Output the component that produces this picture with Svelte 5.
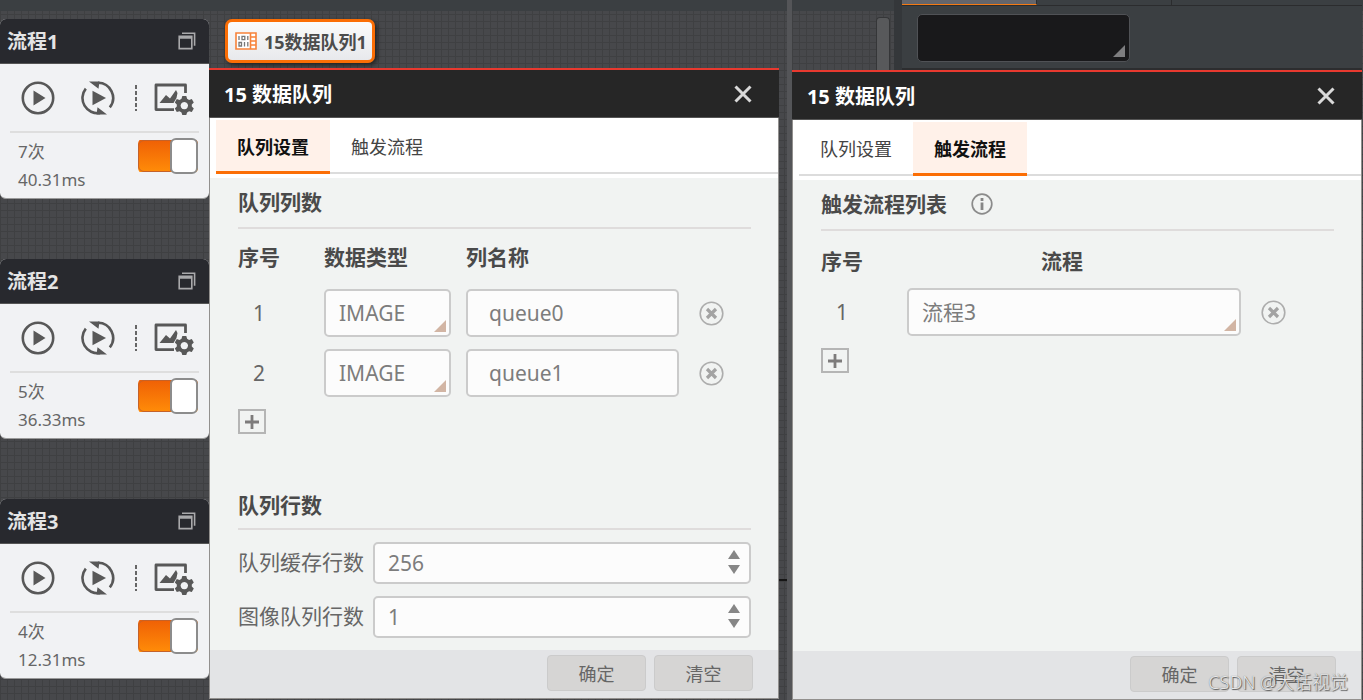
<script lang="ts">
	type Tab = 'settings' | 'trigger';

	let flows = $state([
		{ name: '流程1', count: 7, time: '40.31ms', enabled: true },
		{ name: '流程2', count: 5, time: '36.33ms', enabled: true },
		{ name: '流程3', count: 4, time: '12.31ms', enabled: true }
	]);

	let leftTab: Tab = $state('settings');
	let rightTab: Tab = $state('trigger');

	let columns = $state([
		{ type: 'IMAGE', name: 'queue0' },
		{ type: 'IMAGE', name: 'queue1' }
	]);
	let triggers = $state(['流程3']);
	let cacheRows = $state(256);
	let imageRows = $state(1);

	const addColumn = () => {
		columns.push({ type: 'IMAGE', name: `queue${columns.length}` });
	};

	const clear = (tab: Tab) => {
		if (tab === 'settings') {
			columns = [];
		} else {
			triggers = [];
		}
	};
</script>

<svelte:head>
	<title>数据队列</title>
</svelte:head>

{#snippet removeButton(onclick: () => void)}
	<button class="remove" aria-label="删除" {onclick}>
		<svg viewBox="0 0 25 25" width="25" height="25">
			<circle cx="12.5" cy="12.5" r="11.3" fill="none" stroke="#adadad" stroke-width="1.6" />
			<path d="M8 8l9 9M17 8l-9 9" stroke="#a3a3a3" stroke-width="3.2" />
		</svg>
	</button>
{/snippet}

{#snippet addButton(onclick: () => void)}
	<button class="add" aria-label="添加" {onclick}>
		<svg viewBox="0 0 16 16" width="16" height="16">
			<path d="M8 1v14M1 8h14" stroke="#7d7b7b" stroke-width="2.8" />
		</svg>
	</button>
{/snippet}

{#snippet spinner(step: (n: number) => void)}
	<span class="spin">
		<button aria-label="增加" onclick={() => step(1)}>
			<svg viewBox="0 0 12 9" width="12" height="9"><path d="M6 0l6 9H0z" fill="#868686" /></svg>
		</button>
		<button aria-label="减少" onclick={() => step(-1)}>
			<svg viewBox="0 0 12 9" width="12" height="9"><path d="M6 9L0 0h12z" fill="#868686" /></svg>
		</button>
	</span>
{/snippet}

{#snippet settings()}
	<h2>队列列数</h2>
	<table>
		<colgroup><col class="c-index" /><col class="c-type" /><col /><col class="c-remove" /></colgroup>
		<thead>
			<tr><th>序号</th><th>数据类型</th><th>列名称</th><th></th></tr>
		</thead>
		<tbody>
			{#each columns as column, i}
				<tr>
					<td class="index">{i + 1}</td>
					<td class="type">
						<span class="select">
							<select bind:value={column.type} aria-label="数据类型">
								<option>IMAGE</option>
								<option>INT</option>
								<option>FLOAT</option>
							</select>
						</span>
					</td>
					<td><input class="name" bind:value={column.name} aria-label="列名称" /></td>
					<td class="action">{@render removeButton(() => columns.splice(i, 1))}</td>
				</tr>
			{/each}
		</tbody>
	</table>
	{@render addButton(addColumn)}

	<h2 class="second">队列行数</h2>
	<div class="fields">
		<label for="cache">队列缓存行数</label>
		<div class="number">
			<input id="cache" type="number" bind:value={cacheRows} />
			{@render spinner((n) => (cacheRows += n))}
		</div>
		<label for="image">图像队列行数</label>
		<div class="number">
			<input id="image" type="number" bind:value={imageRows} />
			{@render spinner((n) => (imageRows += n))}
		</div>
	</div>
{/snippet}

{#snippet trigger()}
	<h2>
		触发流程列表
		<svg viewBox="0 0 22 22" width="22" height="22">
			<circle cx="11" cy="11" r="9.8" fill="none" stroke="#8b8b8b" stroke-width="1.7" />
			<path d="M11 5v3M11 9.5v7.5" stroke="#858585" stroke-width="2.8" />
		</svg>
	</h2>
	<table class="triggers">
		<colgroup><col class="c-index" /><col /><col class="c-action" /></colgroup>
		<thead>
			<tr><th>序号</th><th class="mid">流程</th><th></th></tr>
		</thead>
		<tbody>
			{#each triggers as _, i}
				<tr>
					<td class="index">{i + 1}</td>
					<td>
						<span class="select">
							<select bind:value={triggers[i]} aria-label="流程">
								{#each flows as flow}
									<option>{flow.name}</option>
								{/each}
							</select>
						</span>
					</td>
					<td class="action">{@render removeButton(() => triggers.splice(i, 1))}</td>
				</tr>
			{/each}
		</tbody>
	</table>
	{@render addButton(() => triggers.push('流程1'))}
{/snippet}

{#snippet dialog(tab: Tab, setTab: (t: Tab) => void)}
	<section class="dialog">
		<header>
			<h1>15 数据队列</h1>
			<button class="close" aria-label="关闭">
				<svg viewBox="0 0 18 18" width="18" height="18">
					<path d="M1.5 1.5l15 15M16.5 1.5l-15 15" stroke="#d9d9d9" stroke-width="3" />
				</svg>
			</button>
		</header>
		<nav>
			<button class:active={tab === 'settings'} onclick={() => setTab('settings')}>队列设置</button>
			<button class:active={tab === 'trigger'} onclick={() => setTab('trigger')}>触发流程</button>
		</nav>
		<div class="content">
			{#if tab === 'settings'}
				{@render settings()}
			{:else}
				{@render trigger()}
			{/if}
		</div>
		<footer>
			<button>确定</button>
			<button onclick={() => clear(tab)}>清空</button>
		</footer>
	</section>
{/snippet}

<main>
	<div class="pane left">
		<aside>
			{#each flows as flow}
				<article>
					<header>
						<h3>{flow.name}</h3>
						<svg viewBox="0 0 18 18" width="18" height="18" fill="none" stroke="#a9a9ab">
							<path d="M4 1.2h12.6v12.6" stroke-width="1.6" />
							<path d="M1.2 4.4h12.6v12.2H1.2z" stroke-width="1.6" />
							<path d="M1 5.4h13" stroke-width="2.6" />
						</svg>
					</header>
					<div class="tools">
						<button aria-label="运行一次">
							<svg viewBox="0 0 36 36" width="36" height="36">
								<circle cx="18" cy="18" r="15.2" fill="none" stroke="#585858" stroke-width="2.6" />
								<path d="M13.5 10.5L25.5 18l-12 7.5z" fill="#585858" />
							</svg>
						</button>
						<button aria-label="连续运行">
							<svg viewBox="0 0 36 36" width="36" height="36">
								<path d="M5.8 8.6A15.2 15.2 0 0 0 20 33.1M18 2.8A15.2 15.2 0 0 1 29.8 27.4" fill="none" stroke="#585858" stroke-width="2.6" />
								<path d="M9 1.4h10.5l-1 7.4zM27 34.6H16.5l1-7.4z" fill="#585858" />
								<path d="M12.5 10.8L26 18l-13.5 7.2z" fill="#585858" />
							</svg>
						</button>
						<i class="dash"></i>
						<button aria-label="显示设置">
							<svg viewBox="0 0 40 34" width="40" height="34">
								<path d="M31.500 12V4H2v24.600h18" fill="none" stroke="#585858" stroke-width="2.8" stroke-linejoin="round" />
								<path d="M5.5 22l6.5-8 4 3.500 6-8.500 1.500 3-1 5-3 5z" fill="#585858" />
								<path d="M28.300 15h4l.8 2.700 2 1.200 2.700-.8 2 3.500-2 2v2l2 2-2 3.500-2.700-.8-2 1.200-.8 2.500h-4l-.8-2.500-2-1.200-2.700.8-2-3.500 2-2v-2l-2-2 2-3.500 2.700.8 2-1.200zM30.300 20.900a3.700 3.700 0 1 0 .01 0z" fill="#585858" fill-rule="evenodd" />
							</svg>
						</button>
					</div>
					<div class="stats">
						<p>{flow.count}次<br />{flow.time}</p>
						<input class="toggle" type="checkbox" bind:checked={flow.enabled} aria-label="启用{flow.name}" />
					</div>
				</article>
			{/each}
		</aside>
		<div class="stack">
			<div class="canvas">
				<button class="node">
					<svg viewBox="0 0 22 18" width="22" height="18">
						<path d="M1 1h20v16H1zM15.5 1v16M15.5 5h5.5M15.5 9h5.5M15.5 13h5.5" fill="#fff" stroke="#f7833a" stroke-width="1.6" />
						<path d="M4 4v4M12.8 4v4M4 10.5h2.5v3.5H4zM9.5 10v4.5M12.8 10v4.5M7 4.3h2.8v3.4H7z" fill="none" stroke="#777" stroke-width="1.3" />
					</svg>
					15数据队列1
				</button>
			</div>
			{@render dialog(leftTab, (t) => (leftTab = t))}
		</div>
		<i class="wire"></i>
	</div>

	<div class="pane right">
		<div class="top">
			<div class="scroll"><i></i></div>
			<div class="panel">
				<div class="panel-tabs"><i class="on"></i><i></i></div>
				<span class="select dark">
					<select aria-label="参数"><option></option></select>
				</span>
			</div>
		</div>
		{@render dialog(rightTab, (t) => (rightTab = t))}
		<p class="watermark">CSDN @大话视觉</p>
	</div>
</main>

<style>
	:global(body) {
		margin: 0;
		background: #454749;
	}

	main {
		display: flex;
		min-height: 100vh;
		font-family: "Noto Sans", "Noto Sans CJK SC", sans-serif;
		color: #666;
	}

	main, main *, main *::before, main *::after {
		box-sizing: border-box;
	}

	button, input, select {
		font: inherit;
		color: inherit;
		margin: 0;
	}

	button {
		padding: 0;
		border: 0;
		background: none;
		cursor: pointer;
	}

	svg {
		display: block;
		flex: none;
	}

	h1, h2, h3, p {
		margin: 0;
	}

	.pane {
		position: relative;
		display: flex;
		min-width: 0;
		background:
			linear-gradient(#3b3f42, #3b3f42) 0 0 / 100% 11px no-repeat,
			repeating-linear-gradient(90deg, #3f4042 0 1px, transparent 1px 7px),
			repeating-linear-gradient(#3f4042 0 1px, transparent 1px 7px),
			#47484b;
	}

	.left {
		flex: 787;
		padding: 0 8px 2px 0;
	}

	.right {
		flex: 576;
		flex-direction: column;
		padding: 0 1px 1px 0;
		border-left: 5px solid #545558;
	}

	.wire {
		position: absolute;
		right: 0;
		top: 579px;
		width: 8px;
		height: 2px;
		background: #161616;
	}

	/* flow cards */
	aside {
		flex: none;
		width: 209px;
		display: flex;
		flex-direction: column;
		gap: 60px;
		padding-top: 19px;
	}

	article {
		height: 180px;
		border-radius: 6px;
		border-bottom: 1px solid #9a9a9a;
		background: #f1f2f4;
		overflow: hidden;
	}

	article header {
		display: flex;
		align-items: center;
		justify-content: space-between;
		height: 45px;
		padding: 0 13px 0 7px;
		background: #28292e;
		border-bottom: 1px solid #555;
	}

	h3 {
		padding-top: 2px;
		font-size: 20px;
		line-height: 30px;
		color: #e4e4e4;
	}

	.tools {
		display: flex;
		align-items: center;
		height: 69px;
		margin: 0 10px;
		padding: 1px 0 0 10px;
		gap: 24px;
		border-bottom: 2px solid #dedede;
	}

	.dash {
		width: 2px;
		height: 26px;
		margin: 0 -7px 0 -5px;
		background: repeating-linear-gradient(#666 0 4px, transparent 4px 6px);
	}

	.stats {
		display: flex;
		justify-content: space-between;
		padding: 5px 11px 0 18px;
		font-size: 17px;
		line-height: 28px;
	}

	.toggle {
		appearance: none;
		display: flex;
		align-items: center;
		width: 60px;
		height: 36px;
		background: linear-gradient(#ef6005, #ff8c08) 0 50% / 100% 32px no-repeat;
		border-radius: 6px;
	}

	.toggle::before {
		content: '';
		width: 33px;
		height: 32px;
		border: 1px solid #c4622a;
		border-radius: 6px 0 0 6px;
	}

	.toggle::after {
		content: '';
		width: 28px;
		height: 36px;
		margin-left: -1px;
		border: 2px solid #8c8c8c;
		border-radius: 6px;
		background: #fff;
	}

	.toggle:not(:checked) {
		flex-direction: row-reverse;
		background: #bbb;
	}

	/* canvas above the dialogs */
	.stack {
		flex: 1;
		min-width: 0;
		display: flex;
		flex-direction: column;
	}

	.canvas {
		height: 68px;
		padding: 19px 0 0 16px;
	}

	.node {
		display: flex;
		align-items: center;
		gap: 7px;
		height: 44px;
		padding: 0 5px 0 7px;
		border: 3px solid #fb6e05;
		border-radius: 7px;
		background: linear-gradient(#fbfbfb, #e8e9ec);
		box-shadow: 2px 2px 4px #222;
		font-size: 18px;
		font-weight: bold;
		color: #4c4c4c;
	}

	.top {
		display: flex;
		height: 70px;
	}

	.scroll {
		display: flex;
		justify-content: flex-end;
		width: 110px;
		padding: 17px 4px 0 0;
		border-right: 8px solid #34373a;
	}

	.scroll i {
		width: 14px;
		border: 1px solid #353638;
		border-bottom: 0;
		border-radius: 4px 4px 0 0;
		background: #58595b;
	}

	.panel {
		flex: 1;
		background: #3b3f42;
		border-bottom: 2px solid #2c2d2f;
	}

	.panel-tabs {
		display: flex;
		height: 6px;
		margin-bottom: 8px;
		border-bottom: 1px solid #2b2c2e;
	}

	.panel-tabs i {
		width: 135px;
		border-right: 1px solid #2b2c2e;
	}

	.panel-tabs .on {
		background: #64656b;
		border-bottom: 1px solid #f47a14;
	}

	/* dialogs */
	.dialog {
		flex: 1;
		display: flex;
		flex-direction: column;
		border: 1px solid #92908e;
		border-top: 0;
		background: #f1f3f2;
	}

	.dialog header {
		display: flex;
		align-items: center;
		justify-content: space-between;
		height: 50px;
		margin: 0 -1px;
		padding: 1px 27px 0 15px;
		border-top: 2px solid #e8392f;
		border-bottom: 1px solid #555;
		background: #262626;
	}

	h1 {
		padding-top: 1px;
		font-size: 20px;
		line-height: 30px;
		color: #fff;
	}

	nav {
		display: flex;
		height: 60px;
		padding: 2px 0 4px 6px;
		background: linear-gradient(#dcdcdc, #dcdcdc) 6px 54px / 100% 2px no-repeat #fff;
	}

	nav button {
		width: 114px;
		padding-top: 1px;
		border-bottom: 3px solid transparent;
		font-size: 18px;
		color: #444;
	}

	nav .active {
		border-color: #fb6e05;
		background: #fff1e9;
		font-weight: bold;
		color: #111;
	}

	.content {
		flex: 1;
		padding: 0 27px 12px 28px;
		font-size: 21px;
	}

	h2 {
		display: flex;
		align-items: center;
		gap: 24px;
		padding: 9px 0 10px;
		border-bottom: 2px solid #dfdcdc;
		font-size: 21px;
		line-height: 30px;
		color: #4a4a4a;
	}

	.second {
		margin-top: 47px;
		padding-bottom: 8px;
	}

	table {
		width: 100%;
		table-layout: fixed;
		border-collapse: collapse;
	}

	.c-index {
		width: 86px;
	}

	.c-type {
		width: 142px;
	}

	.c-remove {
		width: 72px;
	}

	.c-action {
		width: 93px;
	}

	th, td {
		padding: 0;
		text-align: left;
	}

	th {
		height: 54px;
		color: #4a4a4a;
	}

	.triggers th {
		height: 51px;
		padding-top: 6px;
	}

	.triggers .mid {
		padding-right: 24px;
		text-align: center;
	}

	td {
		height: 60px;
	}

	.index {
		padding-right: 44px;
		text-align: center;
	}

	.type {
		padding-right: 15px;
	}

	.action {
		padding-left: 20px;
	}

	.remove {
		display: block;
	}

	.select {
		position: relative;
		display: block;
		color: #7d7d7d;
	}

	.select::after {
		content: '';
		position: absolute;
		right: 5px;
		bottom: 5px;
		border: 6px solid transparent;
		border-right-color: #d2b5a4;
		border-bottom-color: #d2b5a4;
		pointer-events: none;
	}

	select, .name {
		display: block;
		appearance: none;
		width: 100%;
		height: 48px;
		padding: 0 13px;
		border: 2px solid #cbcbcb;
		border-radius: 5px;
		background: #fcfcfc;
		color: #7d7d7d;
	}

	.name {
		padding: 0 21px;
	}

	.dark {
		width: 213px;
		margin-left: 15px;
	}

	.dark select {
		border: 1px solid #505256;
		background: #19191b;
	}

	.dark::after {
		border-right-color: #7e7e80;
		border-bottom-color: #7e7e80;
	}

	.add {
		display: grid;
		place-items: center;
		width: 28px;
		height: 25px;
		margin-top: 6px;
		border: 2px solid #b5b5b5;
	}

	.fields {
		display: grid;
		grid-template-columns: 126px 1fr;
		gap: 12px 9px;
		align-items: center;
		padding-top: 12px;
	}

	.fields label {
		line-height: 30px;
		padding-bottom: 2px;
		white-space: nowrap;
	}

	.number {
		display: flex;
		height: 42px;
		border: 2px solid #cbcbcb;
		border-radius: 5px;
		background: #fcfcfc;
		color: #7d7d7d;
	}

	.number input {
		flex: 1;
		min-width: 0;
		padding: 0 13px;
		border: 0;
		background: none;
		appearance: textfield;
	}

	.spin {
		display: flex;
		flex-direction: column;
		justify-content: center;
		gap: 6px;
		padding: 0 9px 2px 0;
	}

	footer {
		display: flex;
		justify-content: flex-end;
		gap: 8px;
		height: 48px;
		padding: 5px 25px 0 0;
		background: #e3e4e6;
	}

	footer button {
		width: 99px;
		height: 36px;
		border: 1px solid #cbcbcb;
		border-radius: 4px;
		background: #d6d5d4;
		font-size: 18px;
	}

	.watermark {
		position: absolute;
		right: 15px;
		bottom: 6px;
		font-size: 18px;
		line-height: 26px;
		font-weight: 300;
		color: #e8e8e8;
		text-shadow: 1px 1px 1px #555, 0 0 1px #777;
	}
</style>
